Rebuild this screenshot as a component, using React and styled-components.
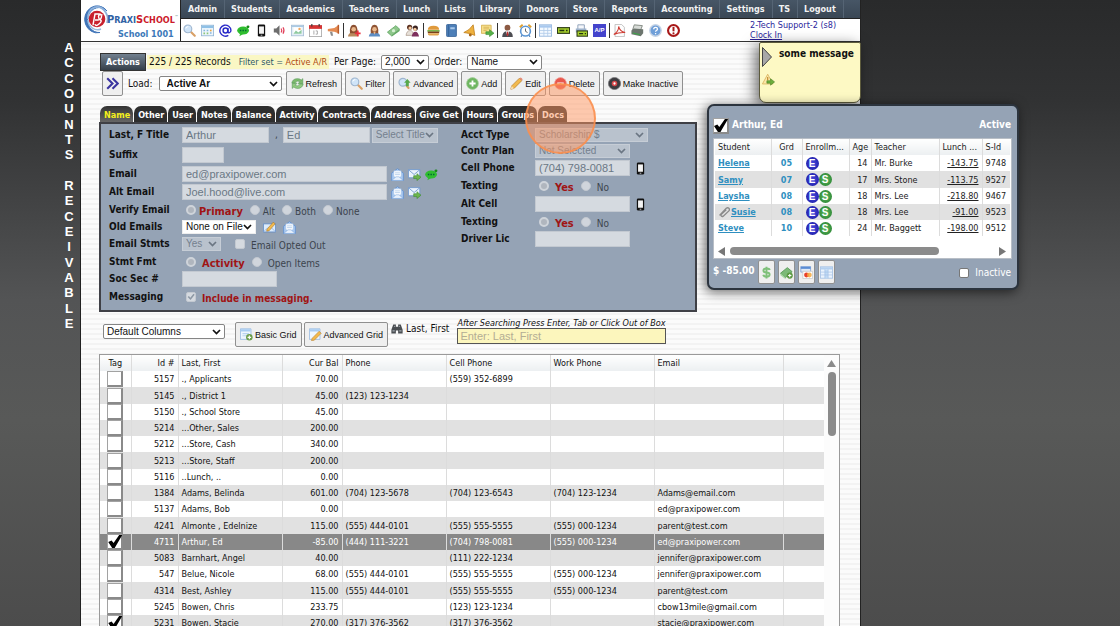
import React from "react";
import styled, { createGlobalStyle, css } from "styled-components";

const ui = '"DejaVu Sans Condensed", "DejaVu Sans", sans-serif';
const arial = '"Liberation Sans", Arial, sans-serif';

const Global = createGlobalStyle`
  * { box-sizing: border-box; }
  html { height: 100%; background: #4c4c4c; }
  body {
    margin: 0;
    height: 100vh;
    overflow: hidden;
    font: 9px/12px ${ui};
    color: #111;
    background: linear-gradient(#292a2b, #313233 100px, #535455 300px, #585958 420px, #4c4c4c 626px);
  }
  button, input, select { margin: 0; font: inherit; color: inherit; }
`;

/* ---------- icons ---------- */

const art = {
  search: (
    <>
      <path d="M9.5 9.5l5 5" stroke="#d9a066" strokeWidth="2.6" strokeLinecap="round" />
      <circle cx="6" cy="6" r="4.8" fill="#cfe4f8" stroke="#9fb6cf" strokeWidth="1.4" />
      <path d="M3.5 5.5a3 3 0 0 1 3-2.3" stroke="#fff" strokeWidth="1.2" fill="none" />
    </>
  ),
  calendar: (
    <>
      <rect x="0.5" y="1.5" width="15" height="13" fill="#eef6fc" stroke="#8fb3d3" />
      <path d="M1 2h14v3H1z" fill="#8fc0e6" />
      <path d="M3 7h2v2H3zM7 7h2v2H7zM11 10h2v2h-2z" fill="#86b7dd" />
      <path d="M11 7h2v2h-2z" fill="#e8a33c" />
      <path d="M3 10.500h2v2H3zM7 10.500h2v2H7z" fill="#8cc67a" />
    </>
  ),
  at: (
    <>
      <circle cx="8" cy="8" r="3" fill="none" stroke="#2a2ac8" strokeWidth="1.8" />
      <path d="M11 5v4.500c0 2 3.700 1.800 3.700-1.700A6.800 6.800 0 1 0 11.500 14" fill="none" stroke="#2a2ac8" strokeWidth="1.7" />
    </>
  ),
  chat: (
    <>
      <ellipse cx="7.500" cy="8" rx="7.300" ry="5" fill="#2fbd2f" />
      <path d="M4 11l-1 4 5-3z" fill="#2fbd2f" />
      <circle cx="13.500" cy="3.500" r="1.800" fill="#178a17" />
      <path d="M3.500 8h1.800M6.700 8h1.800M9.900 8h1.700" stroke="#063" strokeWidth="2" />
    </>
  ),
  phone: (
    <>
      <rect x="3.500" y="0.500" width="9" height="15" rx="1.600" fill="#111" />
      <rect x="5" y="3" width="6" height="9" fill="#f4f4f4" />
      <path d="M7 13.800h2" stroke="#eee" />
    </>
  ),
  sound: (
    <>
      <path d="M1 5.500h3l4-4v13l-4-4H1z" fill="#6d6d6d" />
      <path d="M10 5.500q1.500 2.500 0 5M12.300 4q2.500 4 0 8" fill="none" stroke="#e0405a" strokeWidth="1.400" />
    </>
  ),
  photo: (
    <>
      <rect x="0.500" y="1.500" width="15" height="13" fill="#e4eef6" stroke="#a5bdd4" />
      <path d="M3 4h10v8H3z" fill="#fff" />
      <path d="M3 12l3-4 3 2.500L13 7v5z" fill="#8fcaa0" />
      <circle cx="10.500" cy="6" r="1.500" fill="#f0a860" />
      <path d="M1 2h14v1.500H1z" fill="#9ec3e0" />
    </>
  ),
  date: (
    <>
      <rect x="0.500" y="2" width="15" height="13.500" fill="#fff" stroke="#a5a5a5" />
      <path d="M0 1.500h16V6H0z" fill="#d63434" />
      <path d="M3.500 0v3M12.500 0v3" stroke="#333" strokeWidth="1.400" />
      <path d="M6 8v5M8.300 8.500h2v4h-2" stroke="#999" fill="none" />
    </>
  ),
  horn: (
    <>
      <path d="M1 6l8-1 5-3.500v10L9 9.500 1 9z" fill="#e58b52" />
      <path d="M14 1v11" stroke="#b85a2b" strokeWidth="1.800" />
      <path d="M3.500 9.500l1.500 5h2.500L6.500 9.500z" fill="#8d8d8d" />
    </>
  ),
  user: (
    <>
      <path d="M1 15.500q0-5 7-5.500 7 .5 7 5.500z" fill="#5d8dc4" />
      <path d="M3.500 11.500q-1-10.500 4.500-10.500t4.500 10.500z" fill="#8f5434" />
      <circle cx="8" cy="6.500" r="2.800" fill="#e9b88c" />
      <path d="M6.500 9.500h3L8 13z" fill="#e9b88c" />
    </>
  ),
  userAdd: (
    <>
      <path d="M0 15.500q0-5 6.500-5.500 6.500.5 6.500 5.500z" fill="#b98a5c" />
      <path d="M2.500 11.500q-1-10.500 4.500-10.500t4.500 10.500z" fill="#8b4f30" />
      <circle cx="7" cy="6.500" r="2.800" fill="#e9b88c" />
      <path d="M12 8v7M8.500 11.500h7" stroke="#e8313f" strokeWidth="2.200" />
    </>
  ),
  cash: (
    <>
      <path d="M0.500 10L11 2l4.500 4.500-10 8z" fill="#8dc68a" stroke="#5da45e" />
      <path d="M5.500 14.500l10-8v2l-9.500 7z" fill="#5da45e" />
      <circle cx="8" cy="8.200" r="2" fill="#d6efd2" />
    </>
  ),
  family: (
    <>
      <circle cx="4.500" cy="4" r="3.200" fill="#5a3020" />
      <circle cx="11.500" cy="5" r="3.200" fill="#3a2320" />
      <circle cx="5" cy="5" r="2" fill="#f3c9a0" />
      <circle cx="11" cy="6.500" r="2" fill="#f3c9a0" />
      <path d="M0 14q1-6 5-6t4 6z" fill="#e6e0d8" stroke="#8c7262" strokeWidth=".6" />
      <path d="M7 15.500q1-6 4.500-6t4.500 6z" fill="#7d2f5c" />
    </>
  ),
  burger: (
    <>
      <path d="M1 7q0-5 7-5t7 5z" fill="#e09a3c" />
      <path d="M0.500 7.500h15v2H.5z" fill="#6fae3a" />
      <path d="M1 9.300h14v2H1z" fill="#7a3f1c" />
      <path d="M1 11.300h14q0 3-2 3H3q-2 0-2-3z" fill="#e2a650" />
    </>
  ),
  book: (
    <>
      <rect x="2" y="0.500" width="12" height="15" rx="1" fill="#4d7fb8" stroke="#2f5c92" />
      <path d="M4.500 1v14" stroke="#2f5c92" />
      <path d="M6.500 4h5.500v2.500H6.500z" fill="#a9c8ea" />
    </>
  ),
  bell: (
    <>
      <path d="M1 10.500Q8 8 12.500 1l2 13Q8 11 1 10.500z" fill="#eeb13e" stroke="#bf7f1c" />
      <circle cx="9" cy="13.500" r="1.800" fill="#a8661a" />
    </>
  ),
  noteGo: (
    <>
      <path d="M0.500 1.500h12v10H.5z" fill="#f8e08c" stroke="#d2ac4a" />
      <path d="M3 4h7M3 6h7M3 8h4" stroke="#caa648" strokeWidth=".8" />
      <path d="M6 9.500h4.500V7L16 11.300 10.500 15.500V13H6z" fill="#56b048" stroke="#358a2d" strokeWidth=".7" />
    </>
  ),
  suit: (
    <>
      <path d="M1.500 16q0-7 6.500-7t6.500 7z" fill="#4c4c52" />
      <circle cx="8" cy="4.500" r="3.600" fill="#8c5a44" />
      <path d="M6 9h4l-2 6z" fill="#fff" />
      <path d="M7.300 9.500h1.400l.5 4L8 15l-1.200-1.500z" fill="#c02c2c" />
    </>
  ),
  clock: (
    <>
      <path d="M1 4l3.500-3M15 4l-3.500-3" stroke="#e0a030" strokeWidth="2.400" />
      <circle cx="8" cy="8.800" r="6" fill="#fff" stroke="#5c96d4" strokeWidth="2" />
      <path d="M8 5.500v3.500l2.500 1.500" fill="none" stroke="#444" />
      <path d="M3.500 14l-1 1.700M12.500 14l1 1.700" stroke="#4a7db8" strokeWidth="1.500" />
    </>
  ),
  table: (
    <>
      <rect x="0.500" y="1" width="15" height="14" fill="#f3f9ff" stroke="#8db0dc" />
      <path d="M1 1.500h14v3H1z" fill="#a8c8ee" />
      <path d="M1 8h14M1 11.500h14M6 4v11M10.700 4v11" stroke="#b2cdea" />
    </>
  ),
  check: (
    <>
      <rect x="0.500" y="4.500" width="15" height="7" fill="#a6cf2c" stroke="#2c3a16" strokeWidth="1.400" />
      <path d="M3 8h6M11 8h2" stroke="#22330e" strokeWidth="1.600" />
    </>
  ),
  checkPrint: (
    <>
      <path d="M3.500 1h8v6h-8z" fill="#f5f7fb" stroke="#7e93ae" />
      <path d="M1 5.500h13v5H1z" fill="#9db2cb" />
      <rect x="2.500" y="8.500" width="13" height="6.500" fill="#a6cf2c" stroke="#2c3a16" strokeWidth="1.300" />
      <path d="M5 11.800h5M12 11.800h1.500" stroke="#22330e" strokeWidth="1.400" />
    </>
  ),
  pdf: (
    <>
      <path d="M2.500.5h8l3.500 3.500v11.500H2.500z" fill="#fdfdfd" stroke="#b5b5b5" />
      <path d="M1 13q6-4 6-10 1 6 8 7.500-8-.5-14 2.500z" fill="none" stroke="#cf3b33" strokeWidth="1.300" />
    </>
  ),
  scanner: (
    <>
      <path d="M4 1l10 1-2 5H2z" fill="#d7dbd7" stroke="#737a73" />
      <path d="M.5 8l3-2.500 11.500 1v5L12 15 .5 12.500z" fill="#6c756e" />
      <path d="M2 10.500l9 1.800v1.500l-9-2z" fill="#3fa24a" />
    </>
  ),
  help: (
    <>
      <circle cx="8" cy="8" r="7" fill="#6f9fd8" stroke="#c6d4e6" strokeWidth="1.800" />
      <path d="M5.800 6.500q0-2.300 2.300-2.300t2.300 2q0 1.200-1.300 1.800-1 .5-1 1.500M8.100 11v1.500" fill="none" stroke="#fff" strokeWidth="1.600" />
    </>
  ),
  alert: (
    <>
      <circle cx="8" cy="8" r="6.700" fill="#fff" stroke="#a81818" strokeWidth="2.600" />
      <path d="M8 3.500v5.500" stroke="#a81818" strokeWidth="2.400" />
      <circle cx="8" cy="11.500" r="1.300" fill="#a81818" />
    </>
  ),
  refresh: (
    <>
      <path d="M1 7.500Q2 2 8 2q3 0 4.500 1.800L14.500 2v6H8.800L11 5.800Q8 3.500 5 7.500z" fill="#7dba6e" stroke="#4f9450" strokeWidth=".7" />
      <path d="M15 8.500q-1 5.500-7 5.500-3 0-4.500-1.800L1.500 14V8h5.700L5 10.200q3 2.300 6-1.700z" fill="#93cb82" stroke="#4f9450" strokeWidth=".7" />
    </>
  ),
  searchAdd: (
    <>
      <path d="M9 9l4 4.500" stroke="#d9a066" strokeWidth="2.600" strokeLinecap="round" />
      <circle cx="6" cy="6.500" r="4.800" fill="#cfe4f8" stroke="#9fb6cf" strokeWidth="1.400" />
      <path d="M11.500 2.500l4 4.500h-2.200v4.500H9.700V7H7.500z" fill="#57a84c" />
    </>
  ),
  add: (
    <>
      <circle cx="8" cy="8" r="7.300" fill="#6fb661" stroke="#a7cf9f" />
      <path d="M8 4.200v7.600M4.200 8h7.600" stroke="#fff" strokeWidth="2.200" />
    </>
  ),
  pencil: (
    <>
      <path d="M2 11L11.500 1.500l3 3L5 14l-4 1z" fill="#f2b94c" stroke="#b8802c" strokeWidth=".9" />
      <path d="M11.500 1.500l3 3 1-1.500q-.5-2-2.500-2.500z" fill="#e58a7a" />
      <path d="M2 11l3 3-4 1z" fill="#f6dfb8" />
    </>
  ),
  remove: (
    <>
      <circle cx="8" cy="8" r="7.300" fill="#e8564c" stroke="#f0a49c" />
      <path d="M4 8h8" stroke="#fff" strokeWidth="2.400" />
    </>
  ),
  stop: (
    <>
      <circle cx="8" cy="8" r="7.500" fill="#3c3c40" stroke="#77777a" />
      <circle cx="8" cy="8" r="3.400" fill="#d8484a" />
      <circle cx="8" cy="8" r="1.400" fill="#fff" />
    </>
  ),
  mailOpen: (
    <>
      <path d="M.8 6.500L8 .8l7.200 5.700v9H.8z" fill="#a9c9f0" stroke="#5f8fd0" />
      <path d="M3.500 3.500h9v7l-4.500 2-4.500-2z" fill="#fff" stroke="#9cbce4" strokeWidth=".6" />
      <path d="M5 6h6M5 8.200h6" stroke="#a9c6e8" />
      <path d="M1 15.300l5.200-4.500h3.600l5.200 4.500z" fill="#e6f0fc" stroke="#7fa6dc" strokeWidth=".7" />
    </>
  ),
  mailGo: (
    <>
      <path d="M.5 2h14v10H.5z" fill="#eaf3fd" stroke="#6a94cc" />
      <path d="M1 2.500l6.500 5.500L14 2.500" fill="none" stroke="#6a94cc" />
      <path d="M7 9.500h4V7l5 4.300-5 4.200V13H7z" fill="#6cb54e" stroke="#3d8a2d" strokeWidth=".7" />
    </>
  ),
  mailEdit: (
    <>
      <path d="M.5 3.500h15v10H.5z" fill="#dcebfb" stroke="#5c88c4" />
      <path d="M1 13l5-5M15 13l-5-5" stroke="#8db4e8" />
      <path d="M5 10l7.500-8.500 2.500 2L7.500 12 4.500 12.500z" fill="#f2b94c" stroke="#a87424" strokeWidth=".7" />
    </>
  ),
  gridAdd: (
    <>
      <path d="M.5 1h13v13H.5z" fill="#eef6fe" stroke="#94b8e0" />
      <path d="M1 1.500h12v2.800H1z" fill="#a8ccf2" />
      <path d="M3 7h8M3 9.500h8" stroke="#b8d4ef" strokeWidth="1.400" />
      <circle cx="11.500" cy="11.500" r="4" fill="#6a9c4a" />
      <path d="M11.500 9.300v4.400M9.300 11.500h4.400" stroke="#fff" strokeWidth="1.400" />
    </>
  ),
  gridEdit: (
    <>
      <path d="M.5 1h13v13H.5z" fill="#eef6fe" stroke="#94b8e0" />
      <path d="M1 1.500h12v2.800H1z" fill="#a8ccf2" />
      <path d="M4 12.500L12.500 4l2.500 2.500L6.500 15 3 15.500z" fill="#f2b94c" stroke="#b8802c" strokeWidth=".7" />
    </>
  ),
  binoculars: (
    <>
      <path d="M3 2h3.500v3h3V2H13l2.500 7v5H9.500v-4h-3v4H.5V9z" fill="#4a4e52" />
      <path d="M2 10.500h3M11 10.500h3" stroke="#a4acb2" strokeWidth="1.600" />
      <path d="M4 4.500h1.500M10.500 4.500H12" stroke="#b8c0c6" />
    </>
  ),
  warnGo: (
    <>
      <path d="M7 1.500l6.500 12H.5z" fill="#fbe7a8" stroke="#d8b25c" />
      <path d="M7 5v4" stroke="#c08a2c" strokeWidth="1.400" />
      <path d="M6 9.500h4.500V7L15.500 11l-5 4v-2.500H6z" fill="#6cae3c" stroke="#467f24" strokeWidth=".7" />
    </>
  ),
  dollar: (
    <path d="M12 5Q11.500 3 8 3 4.200 3 4.200 5.500T8 8t3.800 2.600T8 13.100Q4.500 13 4 10.800M8 .8v14.500" fill="none" stroke="#7fc07a" strokeWidth="2.400" />
  ),
  cashAdd: (
    <>
      <path d="M.5 9L9 2l6 5-8.500 7.500z" fill="#7cba78" stroke="#4f9450" />
      <path d="M.5 9v2.500l6 4.500v-2z" fill="#a9d6a4" />
      <circle cx="12" cy="11.800" r="3.800" fill="#5c9a44" />
      <path d="M12 9.800v4M10 11.800h4" stroke="#fff" strokeWidth="1.300" />
    </>
  ),
  cards: (
    <>
      <path d="M1 .5h12v7H1z" fill="#dfe9f6" stroke="#7fa3d6" />
      <path d="M1 1h12v2.500H1z" fill="#5b8cd4" />
      <path d="M3.500 6.500h12v9h-12z" fill="#fff" stroke="#c8c8c8" />
      <circle cx="8" cy="11" r="3" fill="#e8402c" />
      <circle cx="11.500" cy="11" r="3" fill="#f5a83c" fillOpacity=".85" />
    </>
  ),
  column: (
    <>
      <rect x=".5" y="1" width="15" height="14" fill="#eaf3fd" stroke="#a3c0e4" />
      <path d="M1 1.500h14v2.800H1z" fill="#b4d0f0" />
      <path d="M6 4.500h4V15H6z" fill="#bfd9f4" />
      <path d="M6 4v11M10 4v11M1 7.500h14M1 11h14" stroke="#a3c0e4" strokeWidth=".8" />
    </>
  ),
  clip: (
    <path d="M2 12.500L11 3q2-1.500 3.500 0T14.500 6.500L7 13.500q-1.500 1-2.500 0T4.500 11L11 5" fill="none" stroke="#8a8a8a" strokeWidth="1.800" />
  ),
  chevrons: (
    <path d="M1.500 1.500L8 8l-6.500 6.500M8 1.500L14.500 8 8 14.500" fill="none" stroke="#3b35a0" strokeWidth="2.600" />
  ),
};

const Svg = styled.svg`
  display: block;
  flex: none;
  width: ${(p) => p.$w || 13}px;
  height: ${(p) => p.$h || 13}px;
`;
const Icon = ({ name, w, h }) => (
  <Svg viewBox="0 0 16 16" $w={w} $h={h} aria-hidden="true">
    {art[name]}
  </Svg>
);

/* ---------- shared controls ---------- */

const SelectBox = styled.span`
  display: inline-grid;
  align-items: center;
  width: ${(p) => p.$w}px;
  flex: none;
  > * { grid-area: 1 / 1; }
  > svg { justify-self: end; margin-right: 4px; pointer-events: none; }
`;
const SelectEl = styled.select`
  appearance: none;
  width: 100%;
  height: ${(p) => p.$h || 15}px;
  padding: 0;
  font: ${(p) => (p.$bold ? "bold" : "normal")} 10px/12px ${arial};
  padding-left: ${(p) => (p.$bold ? 7 : 3)}px;
  border: 1px solid #858585;
  border-radius: 2px;
  background: #fff;
  color: #111;
  ${(p) => p.$flat && css`border-color: #eee; border-radius: 0;`}
  &:disabled {
    opacity: 1;
    color: #74808d;
    background: #b9c2cd;
    border-color: #c6cdd6;
    border-radius: 0;
  }
`;
const Select = ({ w, value, label, off, ...rest }) => (
  <SelectBox $w={w}>
    <SelectEl aria-label={label} disabled={off} defaultValue={value} {...rest}>
      <option>{value}</option>
    </SelectEl>
    <svg width="9" height="6" viewBox="0 0 9 6" aria-hidden="true">
      <path d="M1 1l3.500 3.500L8 1" fill="none" stroke={off ? "#6b7683" : "#111"} strokeWidth="1.700" />
    </svg>
  </SelectBox>
);

const Input = styled.input`
  width: ${(p) => p.$w}px;
  height: 16px;
  padding: 0 3px;
  border: 1px solid #c3c9d1;
  background: #d5dae0;
  color: #6a7885;
  font: 11px/14px ${arial};
`;

const Dot = styled.input`
  appearance: none;
  width: 10px;
  height: 10px;
  border-radius: 50%;
  background: #d0d5dc;
  border: 1px solid #c2c8d0;
  &:checked { background: #b0b6be; border: 2px solid #cfd4da; }
`;

const Box = styled.input`
  appearance: none;
  width: 10px;
  height: 10px;
  border-radius: 2px;
  background: ${(p) => (p.$white ? "#fff" : "#d5dae0")};
  border: 1px solid ${(p) => (p.$white ? "#777" : "#c3c9d1")};
  &:checked::after {
    content: "";
    display: block;
    height: 8px;
    background: #8d98a5;
    clip-path: polygon(8% 50%, 24% 36%, 42% 58%, 80% 10%, 96% 22%, 44% 88%);
  }
`;

const TagBox = styled.input`
  appearance: none;
  display: block;
  width: 16px;
  height: 16px;
  margin: 0 auto;
  background: #fff;
  border: 1px solid #a2a2a2;
  border-right: 2px solid #8a8a8a;
  border-bottom: 2px solid #8a8a8a;
  &:checked::after {
    content: "";
    display: block;
    width: 14px;
    height: 13px;
    background: #000;
    clip-path: polygon(0 54%, 24% 42%, 38% 62%, 78% 0, 100% 0, 46% 100%, 28% 100%);
  }
`;

/* ---------- page frame ---------- */

const Shell = styled.div`
  position: relative;
  display: grid;
  grid-template-columns: 80px minmax(700px, 1fr) 259px;
  height: 100vh;
  overflow: hidden;
`;
const Side = styled.div`
  display: flex;
  flex-direction: column;
  justify-content: space-between;
  align-items: center;
  height: 291px;
  margin: 40px 0 0 58px;
  color: #fff;
  font: bold 13px/15px ${arial};
  span { height: 15px; }
`;
const Page = styled.div`
  border: solid #222;
  border-width: 0 1px;
  background: repeating-linear-gradient(#fbfbfb 0 3px, #f3f3f3 3px 5px);
  min-width: 0;
`;
const Header = styled.header`
  display: flex;
  height: 42px;
  background: #fff;
  border-bottom: 1px solid #333;
`;
const Logo = styled.div`
  display: grid;
  grid-template-columns: 24px 1fr;
  width: 100px;
  border-right: 1px solid #222;
  padding-top: 5px;
  padding-left: 2px;
`;
const LogoText = styled.div`
  padding-top: 7px;
  white-space: nowrap;
`;
const Brand = styled.div`
  font: bold 11px/15px ${ui};
  color: #cc1a2a;
  i { font-style: normal; color: #2f62a4; }
  small { font-size: 9px; }
  sup { font-size: 4px; line-height: 4px; color: #8aa; }
`;
const School = styled.div`
  padding-left: 11px;
  font: bold 9px/13px ${ui};
  color: #3c78b8;
`;
const HeadMain = styled.div`
  flex: 1;
  min-width: 0;
`;
const Menu = styled.nav`
  display: flex;
  height: 19px;
  padding-left: 1px;
  background: linear-gradient(#475666, #3a4755);
  border-bottom: 1px solid #222;
`;
const MenuLink = styled.a`
  padding: 0 7px 0 6px;
  border-right: 1px solid #556474;
  font-weight: bold;
  line-height: 18px;
  color: #f2f2f2;
  text-decoration: none;
  white-space: nowrap;
`;
const Tools = styled.div`
  display: flex;
  align-items: center;
  gap: 5px;
  height: 22px;
  padding: 0 2px;
`;
const ToolButton = styled.button`
  padding: 0;
  border: 0;
  background: none;
  cursor: pointer;
`;
const Rule = styled.i`
  width: 1px;
  height: 15px;
  margin: 0 -2px;
  background: #333;
`;
const Payable = styled.span`
  display: block;
  width: 13px;
  background: #4444cc;
  color: #fff;
  font: bold 6px/13px ${arial};
`;
const Who = styled.div`
  width: 108px;
  margin-left: auto;
  line-height: 10px;
  color: #2a1f9c;
  white-space: nowrap;
  a { display: block; color: inherit; }
`;

const Main = styled.main`
  padding: 11px 20px 0 18px;
`;
const StatusRow = styled.div`
  display: flex;
  align-items: center;
  height: 18px;
  gap: 5px;
  padding-left: 1px;
  font-size: 10px;
`;
const Actions = styled.button`
  align-self: stretch;
  width: 46px;
  padding: 0;
  border: 1px solid #333;
  background: linear-gradient(#72808f, #353f4a);
  color: #fff;
  font: bold 9px/12px ${ui};
`;
const Records = styled.span`
  display: flex;
  align-items: center;
  gap: 8px;
  height: 14px;
  margin-left: -4px;
  padding: 0 2px;
  background: #faf7c4;
  white-space: nowrap;
  small { font-size: 9px; color: #2c5868; }
  b { font-weight: normal; color: #b04a10; }
`;
const ButtonRow = styled.div`
  display: flex;
  align-items: center;
  gap: 3px;
  padding-left: 3px;
  font-size: 10px;
`;
const Push = styled.button`
  display: flex;
  align-items: center;
  justify-content: center;
  gap: 2px;
  height: 25px;
  padding: 0 4px;
  border: 1px solid #909090;
  border-radius: 2px;
  background: #efefef;
  font: 9px/12px ${arial};
  color: #111;
  white-space: nowrap;
`;
const LoadLabel = styled.label`
  display: flex;
  align-items: center;
  gap: 6px;
  padding: 0 1px 0 2px;
`;

/* ---------- account panel ---------- */

const Tabs = styled.div`
  display: flex;
  gap: 1px;
  margin-top: 10px;
  padding-left: 1px;
`;
const Tab = styled.button`
  height: 16px;
  padding: 1px 3px 0 4px;
  border: 0;
  border-radius: 7px 7px 0 0;
  background: ${(p) => (p.$on ? "linear-gradient(#333, #666)" : "#2e2e2e")};
  color: ${(p) => (p.$on ? "#f4f01c" : "#fff")};
  font: bold 9px/14px ${ui};
`;
const Panel = styled.section`
  display: grid;
  grid-template-columns: 352px 1fr;
  max-width: 598px;
  height: 190px;
  padding: 1px 0 0 8px;
  border: 2px solid #3f4046;
  background: #95a3b5;
  font-size: 10px;
`;
const Row = styled.div`
  display: grid;
  grid-template-columns: ${(p) => p.$label || 73}px 1fr;
  align-items: center;
  height: ${(p) => p.$h || 18}px;
`;
const RowLabel = styled.label`
  font-weight: bold;
  color: #111;
  line-height: 14px;
  white-space: nowrap;
`;
const Fields = styled.div`
  display: flex;
  align-items: center;
  gap: ${(p) => (p.$gap === undefined ? 4 : p.$gap)}px;
`;
const Choice = styled.label`
  display: flex;
  align-items: center;
  gap: ${(p) => p.$gap || 3}px;
  padding-left: 4px;
  margin-right: 3px;
  color: ${(p) => (p.$hot ? "#a01414" : "#3c444d")};
  font-weight: ${(p) => (p.$hot ? "bold" : "normal")};
  font-size: ${(p) => (p.$big ? 11 : 10)}px;
  white-space: nowrap;
  span { padding-top: 3px; }
`;
const Radio = ({ text, hot, name, ...rest }) => (
  <Choice $hot={hot} $big={hot} {...rest}>
    <Dot type="radio" name={name} defaultChecked={hot} disabled />
    <span>{text}</span>
  </Choice>
);
const Right = styled.div`
  padding-top: 2px;
`;

/* ---------- search bar ---------- */

const SearchBar = styled.div`
  display: flex;
  align-items: flex-start;
  gap: 2px;
  height: 42px;
  padding: 10px 0 0 4px;
  font-size: 10px;
`;
const ColumnsPick = styled.div`
  padding: 2px 8px 0 0;
`;
const FindLabel = styled.label`
  display: flex;
  align-items: center;
  gap: 3px;
  padding: 1px 6px 0 1px;
  white-space: nowrap;
`;
const Find = styled.div`
  display: flex;
  flex-direction: column;
  em { font-size: 9px; line-height: 10px; margin-top: -4px; white-space: nowrap; }
`;
const FindInput = styled.input`
  width: 209px;
  height: 16px;
  padding: 0 2px;
  border: 1px solid #555;
  background: #fcf6bd;
  font: 11px/14px ${arial};
  &::placeholder { color: #b3ad94; }
`;

/* ---------- data grids ---------- */

const GridFrame = styled.div`
  display: flex;
  border: 1px solid #9a9a9a;
  background: #fff;
`;
const Grid = styled.table`
  flex: 1;
  width: 100%;
  table-layout: fixed;
  border-collapse: collapse;
  td, th {
    padding: 0 3px;
    height: 16px;
    line-height: 12px;
    text-align: left;
    font-weight: normal;
    white-space: nowrap;
    overflow: hidden;
    border-right: 1px solid #dcdcdc;
  }
  th { background: linear-gradient(#fff, #eceff1); }
  tbody tr:nth-child(even) { background: #e1e1e1; }
  tbody tr:nth-child(4n + 2) td { height: 17px; }
  td:last-child, th:last-child { border-right: 0; }
`;
const AccountRow = styled.tr`
  ${(p) => p.$on && css`
    && { background: #888; color: #fff; }
  `}
`;
const Cell = styled.td`
  && { text-align: ${(p) => p.$align || "left"}; }
`;
const TagCell = styled.td`
  && { padding: 0; }
`;
const Track = styled.div`
  display: flex;
  flex-direction: column;
  align-items: center;
  width: 15px;
  padding-top: 5px;
  gap: 5px;
  background: #fcfcfc;
`;
const Thumb = styled.div`
  width: 8px;
  height: 64px;
  border-radius: 4px;
  background: #8b8b8b;
`;

/* ---------- floating pieces ---------- */

const Card = styled.aside`
  position: absolute;
  left: 707px;
  top: 104px;
  width: 312px;
  height: 186px;
  padding: 9px 5px 0 4px;
  border: 2px solid #2c343e;
  border-radius: 7px;
  background: #95a3b5;
  box-shadow: -2px 2px 12px rgba(0, 0, 0, 0.6);
  color: #fff;
`;
const CardHead = styled.div`
  display: flex;
  align-items: center;
  gap: 3px;
  height: 23px;
  padding: 0 1px 3px 0;
  font: bold 10px/14px ${ui};
  ${TagBox} { margin: 2px 0 0; }
  span { margin-left: auto; }
`;
const CardTable = styled.div`
  height: 121px;
  padding: 0 1px;
  background: #fff;
  border: 1px solid #b8bec6;
  color: #222;
  a { color: #2f8fc0; font-weight: bold; }
  u { text-underline-offset: 1px; }
`;
const Name = styled.td`
  div { display: flex; align-items: center; gap: 1px; }
`;
const Grade = styled.td`
  && { text-align: center; color: #2f8fc0; font-weight: bold; }
`;
const Badges = styled.td`
  div { display: flex; }
`;
const Badge = styled.b`
  width: 13px;
  height: 13px;
  border-radius: 50%;
  background: ${(p) => (p.$s ? "radial-gradient(#5fb85f, #1f7a2a)" : "radial-gradient(#4a4ae0, #14149c)")};
  color: #fff;
  font: bold 10px/13px ${arial};
  text-align: center;
`;
const HScroll = styled.div`
  display: flex;
  align-items: center;
  gap: 5px;
  height: 12px;
  margin-top: 9px;
  padding: 0 4px 0 3px;
`;
const HThumb = styled.i`
  width: 209px;
  height: 8px;
  border-radius: 4px;
  background: #8b8b8b;
  margin-right: auto;
`;
const CardFoot = styled.div`
  display: flex;
  align-items: center;
  gap: 3px;
  padding: 1px 1px 0 0;
  strong { font-size: 10px; line-height: 14px; padding-bottom: 3px; white-space: nowrap; }
  label { display: flex; align-items: center; gap: 6px; margin-left: auto; padding-top: 2px; font-size: 10px; }
`;
const Small = styled(Push)`
  width: 17px;
  height: 24px;
  padding: 0;
`;
const Expand = styled(Push)`
  width: 21px;
  padding: 0;
`;
const Note = styled.aside`
  position: absolute;
  left: 759px;
  top: 42px;
  width: 102px;
  height: 61px;
  padding: 4px 2px;
  border: 1px solid #5c5a3c;
  border-radius: 2px 2px 7px 7px;
  background: #fdf9c4;
  box-shadow: -4px 3px 14px rgba(0, 0, 0, 0.55);
  display: flex;
  flex-direction: column;
  gap: 6px;
`;
const NoteText = styled.div`
  display: flex;
  gap: 7px;
  font: bold 10px/14px ${ui};
  white-space: nowrap;
`;
const Halo = styled.div`
  position: absolute;
  left: 525px;
  top: 83px;
  width: 71px;
  height: 71px;
  border: 2px solid rgba(250, 142, 76, 0.85);
  border-radius: 50%;
  background: rgba(255, 150, 95, 0.5);
  pointer-events: none;
`;

/* ---------- data ---------- */

const menu = ["Admin", "Students", "Academics", "Teachers", "Lunch", "Lists", "Library", "Donors", "Store", "Reports", "Accounting", "Settings", "TS", "Logout"];
const tools = ["search", "calendar", "at", "chat", "phone", "sound", "photo", "date", "horn", "|", "userAdd", "user", "cash", "family", "|", "burger", "book", "bell", "noteGo", "|", "suit", "clock", "|", "table", "check", "checkPrint", "A/P", "|", "pdf", "scanner", "help", "alert"];
const wide = ["userAdd", "user", "family"];
const tabs = ["Name", "Other", "User", "Notes", "Balance", "Activity", "Contracts", "Address", "Give Get", "Hours", "Groups", "Docs"];
const accounts = [
  ["5157", "., Applicants", "70.00", "", "(559) 352-6899", "", ""],
  ["5145", "., District 1", "45.00", "(123) 123-1234", "", "", ""],
  ["5150", "., School Store", "45.00", "", "", "", ""],
  ["5214", "...Other, Sales", "200.00", "", "", "", ""],
  ["5212", "...Store, Cash", "340.00", "", "", "", ""],
  ["5213", "...Store, Staff", "200.00", "", "", "", ""],
  ["5116", "..Lunch, ..", "0.00", "", "", "", ""],
  ["1384", "Adams, Belinda", "601.00", "(704) 123-5678", "(704) 123-6543", "(704) 123-1234", "Adams@email.com"],
  ["5137", "Adams, Bob", "0.00", "", "", "", "ed@praxipower.com"],
  ["4241", "Almonte , Edelnize", "115.00", "(555) 444-0101", "(555) 555-5555", "(555) 000-1234", "parent@test.com"],
  ["4711", "Arthur, Ed", "-85.00", "(444) 111-3221", "(704) 798-0081", "(555) 000-1234", "ed@praxipower.com"],
  ["5083", "Barnhart, Angel", "40.00", "", "(111) 222-1234", "", "jennifer@praxipower.com"],
  ["547", "Belue, Nicole", "68.00", "(555) 444-0101", "(555) 555-5555", "(555) 000-1234", "jennifer@praxipower.com"],
  ["4314", "Best, Ashley", "115.00", "(555) 444-0101", "(555) 555-5555", "(555) 000-1234", "parent@test.com"],
  ["5245", "Bowen, Chris", "233.75", "", "(123) 123-1234", "", "cbow13mile@gmail.com"],
  ["5231", "Bowen, Stacie", "270.00", "(317) 376-3562", "(317) 376-3562", "", "stacie@praxipower.com"],
];
const students = [
  ["Helena", "05", "E", "14", "Mr. Burke", "-143.75", "9748"],
  ["Samy", "07", "ES", "17", "Mrs. Stone", "-113.75", "9527"],
  ["Laysha", "08", "ES", "18", "Mrs. Lee", "-218.80", "9467"],
  ["Susie", "08", "ES", "18", "Mrs. Lee", "-91.00", "9523"],
  ["Steve", "10", "ES", "24", "Mr. Baggett", "-198.00", "9512"],
];
const Cols = ({ widths }) => (
  <colgroup>
    {widths.map((w, i) => <col key={i} style={w ? { width: w } : undefined} />)}
  </colgroup>
);

function TopBar() {
  return (
    <Header>
      <Logo>
        <svg width="27" height="30" viewBox="0 0 27 30" role="img" aria-label="PraxiSchool logo">
          <path d="M24 6A12.500 13.500 0 1 0 17 27.500 11.500 12.500 0 1 1 24 6z" fill="#3f74b8" stroke="#3f74b8" strokeWidth="1" />
          <path d="M5 14A9.500 10.500 0 0 1 23 8a10 11 0 0 1 1 10" fill="none" stroke="#8fb2dc" strokeWidth="1.800" />
          <path d="M5 15a9.500 10.500 0 0 0 13 9" fill="none" stroke="#9cbde0" strokeWidth="1.500" />
          <circle cx="14" cy="14" r="8.300" fill="#c8202e" />
          <path d="M10 20l2-11h4q3 0 2.500 3T15 15h-3M19.500 10q-4-1-4 1.500t2 3.500-1.500 4-4 0" fill="none" stroke="#fff" strokeWidth="1.400" />
        </svg>
        <LogoText>
          <Brand><i>P<small>RAXI</small></i>S<small>CHOOL</small><sup>™</sup></Brand>
          <School>School 1001</School>
        </LogoText>
      </Logo>
      <HeadMain>
        <Menu>{menu.map((m) => <MenuLink key={m} href="#">{m}</MenuLink>)}</Menu>
        <Tools>
          {tools.map((t, i) =>
            t === "|" ? <Rule key={i} /> : (
              <ToolButton key={i} aria-label={t}>
                {t === "A/P" ? <Payable>A/P</Payable> : <Icon name={t} w={wide.includes(t) ? 15 : 13} />}
              </ToolButton>
            )
          )}
          <Who>2-Tech Support-2 (s8)<a href="#">Clock In</a></Who>
        </Tools>
      </HeadMain>
    </Header>
  );
}

function AccountPanel() {
  return (
    <Panel>
      <div>
        <Row $h={20}>
          <RowLabel htmlFor="last">Last, F Title</RowLabel>
          <Fields $gap={2}>
            <Input id="last" $w={87} defaultValue="Arthur" disabled />
            <Choice as="span">,</Choice>
            <Input $w={87} defaultValue="Ed" aria-label="First" disabled />
            <Select w={66} value="Select Title" label="Title" off />
          </Fields>
        </Row>
        <Row $h={20}>
          <RowLabel htmlFor="suffix">Suffix</RowLabel>
          <Fields><Input id="suffix" $w={42} disabled /></Fields>
        </Row>
        <Row>
          <RowLabel htmlFor="email">Email</RowLabel>
          <Fields>
            <Input id="email" $w={205} defaultValue="ed@praxipower.com" disabled />
            <Icon name="mailOpen" /><Icon name="mailGo" /><Icon name="chat" />
          </Fields>
        </Row>
        <Row>
          <RowLabel htmlFor="alt">Alt Email</RowLabel>
          <Fields>
            <Input id="alt" $w={205} defaultValue="Joel.hood@live.com" disabled />
            <Icon name="mailOpen" /><Icon name="mailGo" />
          </Fields>
        </Row>
        <Row>
          <RowLabel as="span">Verify Email</RowLabel>
          <Fields $gap={0}>
            <Radio name="verify" text="Primary" hot />
            <Radio name="verify" text="Alt" />
            <Radio name="verify" text="Both" />
            <Radio name="verify" text="None" />
          </Fields>
        </Row>
        <Row $h={16}>
          <RowLabel as="span">Old Emails</RowLabel>
          <Fields $gap={7}>
            <Select w={74} value="None on File" label="Old Emails" $flat $h={14} />
            <Icon name="mailEdit" /><Icon name="mailOpen" />
          </Fields>
        </Row>
        <Row>
          <RowLabel as="span">Email Stmts</RowLabel>
          <Fields $gap={10}>
            <Select w={39} value="Yes" label="Email Stmts" off $h={14} />
            <Choice $gap={6}><Box type="checkbox" disabled /><span>Email Opted Out</span></Choice>
          </Fields>
        </Row>
        <Row>
          <RowLabel as="span">Stmt Fmt</RowLabel>
          <Fields $gap={0}>
            <Radio name="fmt" text="Activity" hot $gap={6} />
            <Radio name="fmt" text="Open Items" $gap={6} />
          </Fields>
        </Row>
        <Row $h={16}>
          <RowLabel htmlFor="ssn">Soc Sec #</RowLabel>
          <Fields><Input id="ssn" $w={95} disabled /></Fields>
        </Row>
        <Row $h={20}>
          <RowLabel as="span">Messaging</RowLabel>
          <Fields>
            <Choice $hot $gap={6}><Box type="checkbox" defaultChecked disabled /><span>Include in messaging.</span></Choice>
          </Fields>
        </Row>
      </div>
      <Right>
        <Row $label={74} $h={16}>
          <RowLabel as="span">Acct Type</RowLabel>
          <Select w={113} value="Scholarship $" label="Acct Type" off $h={14} />
        </Row>
        <Row $label={74} $h={16}>
          <RowLabel as="span">Contr Plan</RowLabel>
          <Select w={95} value="Not Selected" label="Contr Plan" off $h={14} />
        </Row>
        <Row $label={74}>
          <RowLabel htmlFor="cell">Cell Phone</RowLabel>
          <Fields><Input id="cell" $w={95} defaultValue="(704) 798-0081" disabled /><Icon name="phone" /></Fields>
        </Row>
        <Row $label={74}>
          <RowLabel as="span">Texting</RowLabel>
          <Fields $gap={0}>
            <Radio name="t1" text="Yes" hot $gap={6} /><Radio name="t1" text="No" $gap={6} />
          </Fields>
        </Row>
        <Row $label={74}>
          <RowLabel htmlFor="altcell">Alt Cell</RowLabel>
          <Fields><Input id="altcell" $w={95} disabled /><Icon name="phone" /></Fields>
        </Row>
        <Row $label={74}>
          <RowLabel as="span">Texting</RowLabel>
          <Fields $gap={0}>
            <Radio name="t2" text="Yes" hot $gap={6} /><Radio name="t2" text="No" $gap={6} />
          </Fields>
        </Row>
        <Row $label={74} $h={16}>
          <RowLabel htmlFor="lic">Driver Lic</RowLabel>
          <Fields><Input id="lic" $w={95} disabled /></Fields>
        </Row>
      </Right>
    </Panel>
  );
}

function AccountGrid() {
  return (
    <GridFrame>
      <Grid>
        <Cols widths={[31, 47, 104, 60, 104, 104, 104, 129, 0]} />
        <thead>
          <tr>
            <Cell as="th" $align="center">Tag</Cell>
            <Cell as="th" $align="right">Id #</Cell>
            <th>Last, First</th>
            <Cell as="th" $align="right">Cur Bal</Cell>
            <th>Phone</th><th>Cell Phone</th><th>Work Phone</th><th>Email</th><th></th>
          </tr>
        </thead>
        <tbody>
          {accounts.map((a) => (
            <AccountRow key={a[0]} $on={a[0] === "4711"}>
              <TagCell>
                <TagBox type="checkbox" aria-label={"Tag " + a[1]} defaultChecked={a[0] === "4711" || a[0] === "5231"} />
              </TagCell>
              {a.map((v, i) => <Cell key={i} $align={i === 0 || i === 2 ? "right" : "left"}>{v}</Cell>)}
              <td></td>
            </AccountRow>
          ))}
        </tbody>
      </Grid>
      <Track>
        <svg width="9" height="7" viewBox="0 0 9 7" aria-hidden="true"><path d="M4.500 0L9 7H0z" fill="#8b8b8b" /></svg>
        <Thumb />
      </Track>
    </GridFrame>
  );
}

function StudentCard() {
  return (
    <Card>
      <CardHead>
        <TagBox type="checkbox" defaultChecked aria-label="Arthur, Ed" />
        Arthur, Ed
        <span>Active</span>
      </CardHead>
      <CardTable>
        <Grid>
          <Cols widths={[56, 31, 47, 22, 68, 43, 0]} />
          <thead>
            <tr>
              <th>Student</th><Cell as="th" $align="center">Grd</Cell><th>Enrollm...</th><th>Age</th>
              <th>Teacher</th><th>Lunch ...</th><th>S-Id</th>
            </tr>
          </thead>
          <tbody>
            {students.map(([n, g, e, age, t, l, id]) => (
              <tr key={n}>
                <Name><div>{n === "Susie" && <Icon name="clip" w={12} h={12} />}<a href="#">{n}</a></div></Name>
                <Grade>{g}</Grade>
                <Badges><div>{[...e].map((x) => <Badge key={x} $s={x === "S"}>{x}</Badge>)}</div></Badges>
                <Cell $align="right">{age}</Cell>
                <td>{t}</td>
                <Cell $align="right"><u>{l}</u></Cell>
                <td>{id}</td>
              </tr>
            ))}
          </tbody>
        </Grid>
        <HScroll>
          <svg width="7" height="9" viewBox="0 0 7 9" aria-hidden="true"><path d="M7 0v9L0 4.500z" fill="#777" /></svg>
          <HThumb />
          <svg width="7" height="9" viewBox="0 0 7 9" aria-hidden="true"><path d="M0 0v9l7-4.500z" fill="#777" /></svg>
        </HScroll>
      </CardTable>
      <CardFoot>
        <strong>$ -85.00</strong>
        <Small aria-label="Payment"><Icon name="dollar" /></Small>
        <Small aria-label="Add cash"><Icon name="cashAdd" /></Small>
        <Small aria-label="Cards"><Icon name="cards" /></Small>
        <Small aria-label="Columns"><Icon name="column" /></Small>
        <label><Box type="checkbox" $white />Inactive</label>
      </CardFoot>
    </Card>
  );
}

export default function App() {
  return (
    <>
      <Global />
      <Shell>
        <Side>{[..."ACCOUNTS RECEIVABLE"].map((c, i) => <span key={i}>{c}</span>)}</Side>
        <Page>
          <TopBar />
          <Main>
            <StatusRow>
              <Actions>Actions</Actions>
              <Records>225 / 225 Records <small>Filter set = <b>Active A/R</b></small></Records>
              Per Page: <Select w={48} value="2,000" label="Per Page" />
              Order: <Select w={75} value="Name" label="Order" />
            </StatusRow>
            <ButtonRow>
              <Expand aria-label="Expand"><Icon name="chevrons" /></Expand>
              <LoadLabel>Load: <Select w={123} value="Active Ar" $bold /></LoadLabel>
              <Push><Icon name="refresh" />Refresh</Push>
              <Push><Icon name="search" />Filter</Push>
              <Push><Icon name="searchAdd" />Advanced</Push>
              <Push><Icon name="add" />Add</Push>
              <Push><Icon name="pencil" />Edit</Push>
              <Push><Icon name="remove" />Delete</Push>
              <Push><Icon name="stop" />Make Inactive</Push>
            </ButtonRow>
            <Tabs>{tabs.map((t, i) => <Tab key={t} $on={i === 0}>{t}</Tab>)}</Tabs>
            <AccountPanel />
            <SearchBar>
              <ColumnsPick><Select w={122} value="Default Columns" label="Columns" /></ColumnsPick>
              <Push><Icon name="gridAdd" />Basic Grid</Push>
              <Push><Icon name="gridEdit" />Advanced Grid</Push>
              <FindLabel htmlFor="find"><Icon name="binoculars" w={12} h={12} />Last, First</FindLabel>
              <Find>
                <em>After Searching Press Enter, Tab or Click Out of Box</em>
                <FindInput id="find" placeholder="Enter: Last, First" />
              </Find>
            </SearchBar>
            <AccountGrid />
          </Main>
        </Page>
        <Note>
          <NoteText>
            <svg width="10" height="20" viewBox="0 0 10 20" aria-hidden="true"><path d="M.5.5L9.500 10 .5 19.500z" fill="#a8a8a8" stroke="#444" /></svg>
            some message
          </NoteText>
          <Icon name="warnGo" />
        </Note>
        <StudentCard />
        <Halo />
      </Shell>
    </>
  );
}
